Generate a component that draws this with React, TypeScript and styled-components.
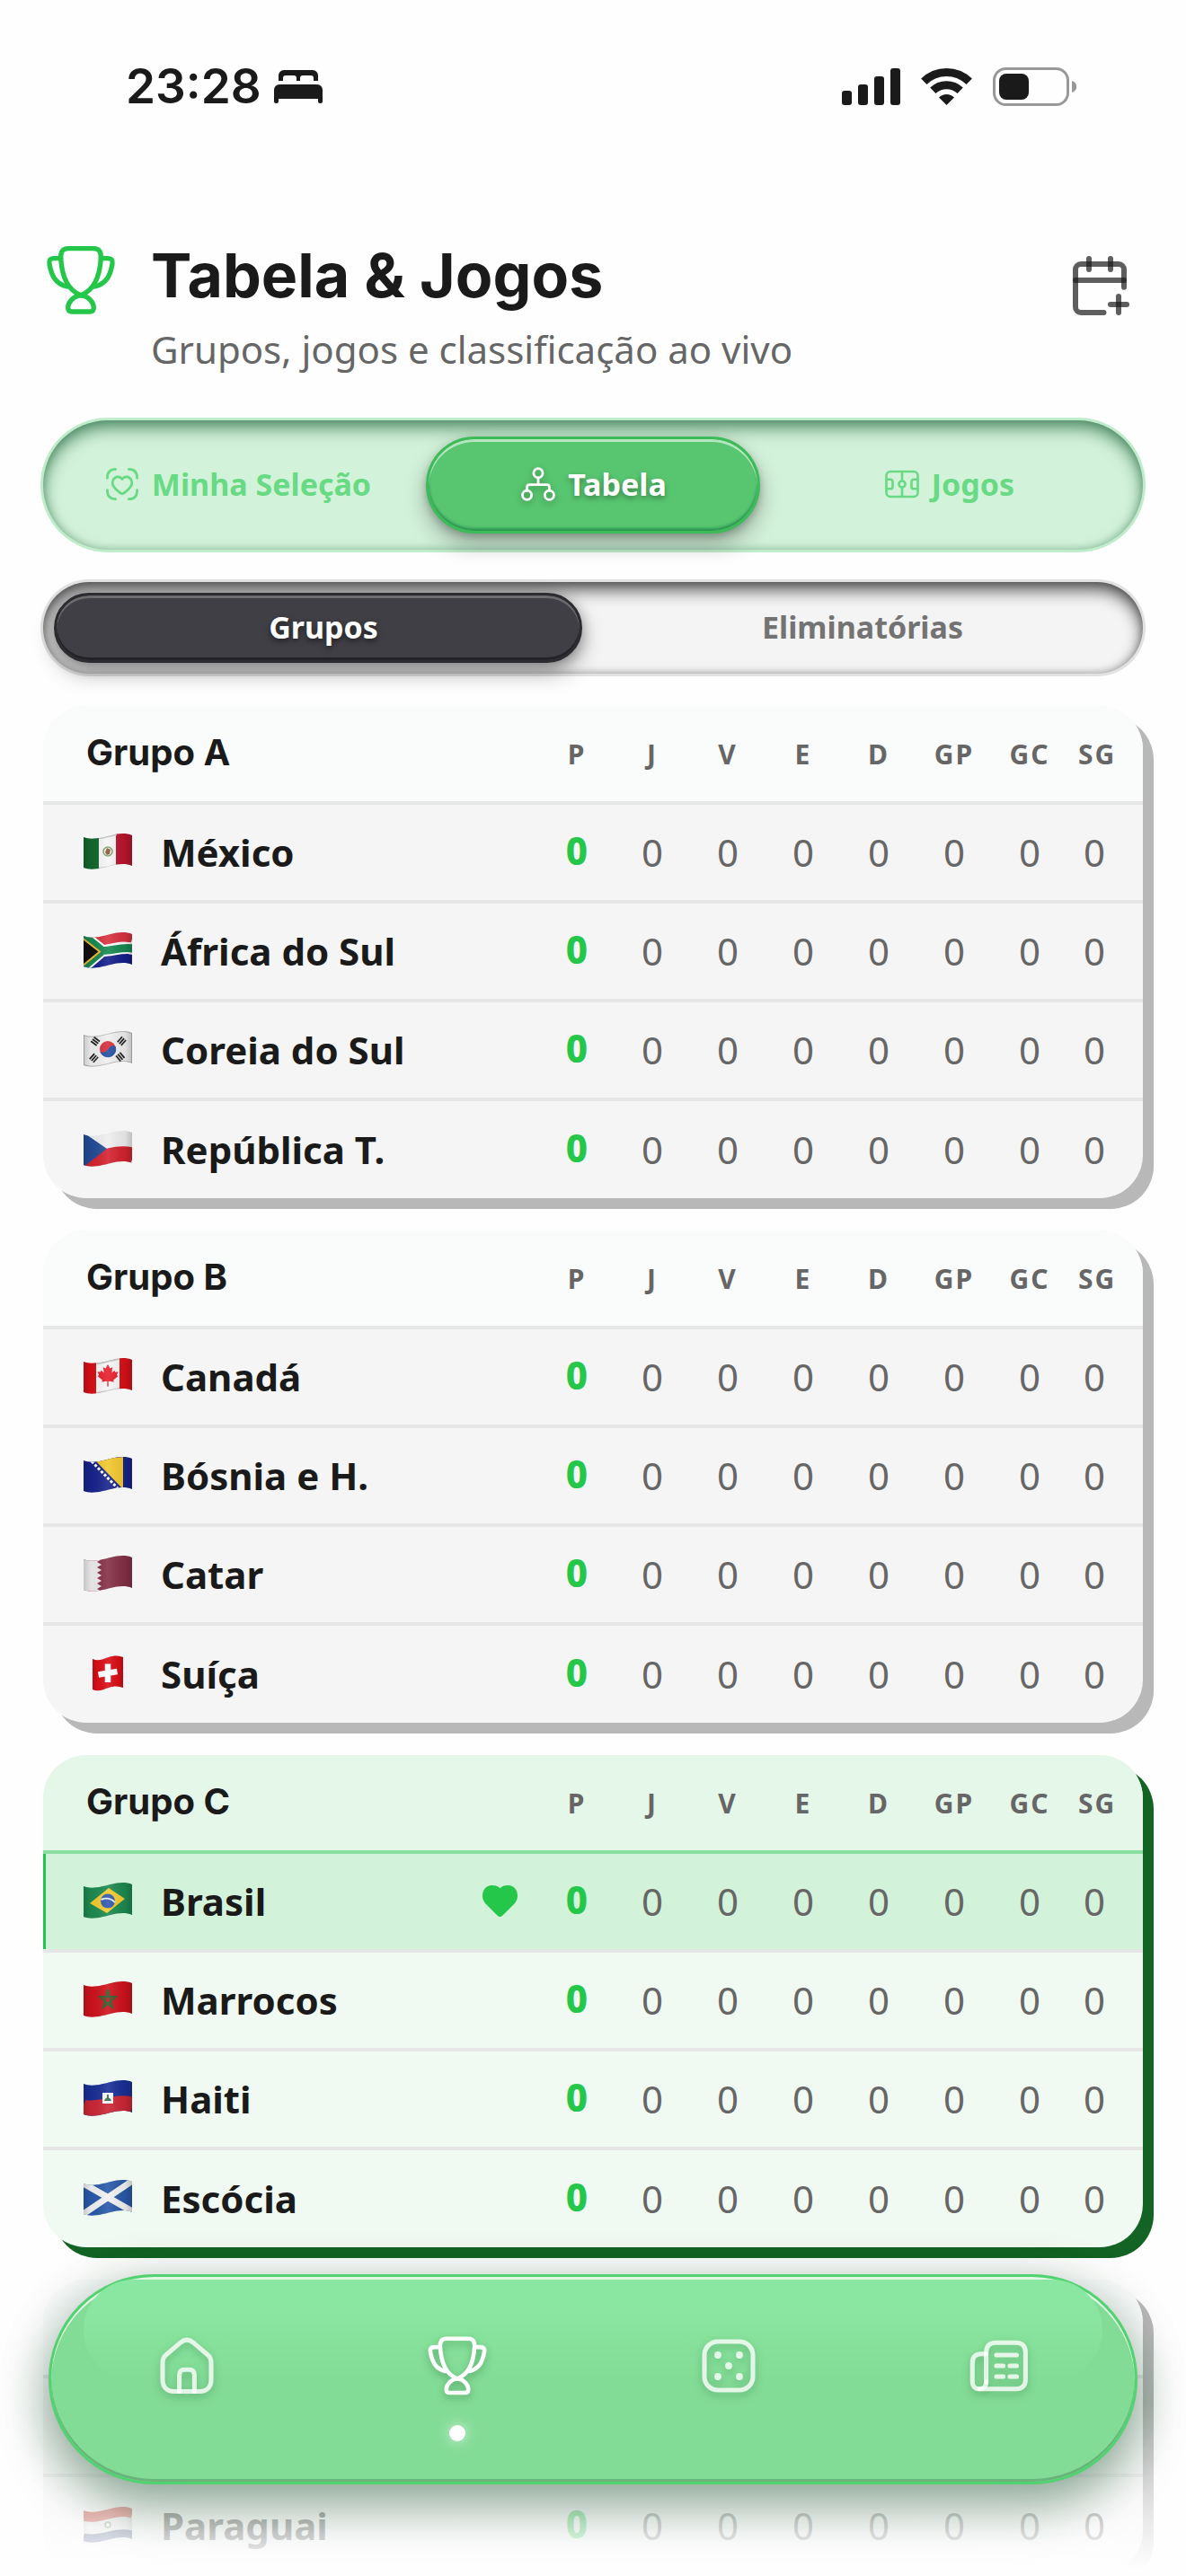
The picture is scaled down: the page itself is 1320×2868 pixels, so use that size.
import React, { useState } from 'react';
import styled, { createGlobalStyle, css } from 'styled-components';

const GlobalStyle = createGlobalStyle`
  * {
    box-sizing: border-box;
  }
  body {
    margin: 0;
    background: #fefefe;
    color: #1a1a1a;
    font-family: 'Noto Sans', sans-serif;
  }
  button {
    font-family: inherit;
    cursor: pointer;
  }
`;

const Screen = styled.div`
  position: relative;
  height: 100vh;
  overflow: hidden;
`;

const StatusBar = styled.div`
  display: flex;
  align-items: center;
  justify-content: space-between;
  height: 192px;
  padding: 0 122px 0 140px;
`;

const StatusGroup = styled.div<{ $gap: number }>`
  display: flex;
  align-items: center;
  gap: ${({ $gap }) => $gap}px;
`;

const Clock = styled.span`
  font-family: Inter, sans-serif;
  font-size: 53px;
  font-weight: 600;
  line-height: 60px;
`;

const Content = styled.main`
  display: flex;
  flex-direction: column;
  gap: 36px;
  padding: 72px 48px 0;
`;

const Header = styled.header`
  display: flex;
  align-items: flex-start;
  gap: 36px;
  padding-bottom: 15px;
`;

const TrophyBox = styled.div`
  display: flex;
  align-items: center;
  justify-content: center;
  width: 84px;
  height: 96px;
  color: #24c74a;
`;

const Titles = styled.div`
  flex: 1;
`;

const Title = styled.h1`
  margin: 0 0 12px;
  font-family: Inter, sans-serif;
  font-size: 68px;
  font-weight: 700;
  line-height: 84px;
`;

const Subtitle = styled.p`
  margin: 0;
  color: #666;
  font-size: 42px;
  line-height: 57px;
`;

const CalendarButton = styled.button`
  margin: 18px 12px 0 0;
  padding: 0;
  border: 0;
  background: none;
  color: rgba(26, 26, 26, 0.7);

  svg {
    display: block;
  }
`;

const Tabs = styled.div`
  display: flex;
  height: 144px;
  padding: 18px;
  border-radius: 72px;
  background: #d3f2da;
  box-shadow: 0 0 0 3px #bfecca, inset 0 9px 18px rgba(23, 95, 52, 0.65), inset 0 0 9px rgba(23, 95, 52, 0.3);
`;

const Tab = styled.button<{ $active: boolean }>`
  display: flex;
  flex: 1;
  align-items: center;
  justify-content: center;
  gap: 12px;
  margin: 0 12px;
  padding: 0 0 2px;
  border: 3px solid transparent;
  border-radius: 54px;
  background: none;
  color: #69da84;
  font-size: 34px;
  font-weight: 700;
  white-space: nowrap;

  ${({ $active }) =>
    $active &&
    css`
      border-color: #3cbc58;
      background: #58c670;
      color: #fff;
      box-shadow: inset 0 3px 0 rgba(255, 255, 255, 0.55), inset 0 -3px 3px rgba(10, 110, 60, 0.55),
        0 12px 24px rgba(0, 0, 0, 0.3), 0 3px 9px rgba(0, 0, 0, 0.2);
      text-shadow: 0 3px 6px rgba(0, 0, 0, 0.35);

      svg {
        filter: drop-shadow(0 3px 4px rgba(0, 0, 0, 0.3));
      }
    `}
`;

const Segmented = styled.div`
  position: relative;
  display: flex;
  height: 102px;
  padding: 12px;
  border-radius: 51px;
  background: #f4f4f4;
  box-shadow: 0 0 0 3px #e2e2e2, inset 0 9px 18px rgba(0, 0, 0, 0.65), inset 0 0 9px rgba(0, 0, 0, 0.25);
`;

const Thumb = styled.span<{ $second: boolean }>`
  position: absolute;
  top: 12px;
  bottom: 12px;
  left: ${({ $second }) => ($second ? '50%' : '12px')};
  width: calc(50% - 24px);
  border: 3px solid #2c2c30;
  border-radius: 39px;
  background: #3f3f45;
  box-shadow: inset 0 3px 0 #6c6c6e, inset 0 -3px 0 #232327, 0 12px 24px rgba(0, 0, 0, 0.3),
    0 3px 15px rgba(0, 0, 0, 0.3);
`;

const Segment = styled.button<{ $active: boolean }>`
  position: relative;
  flex: 1;
  padding: 0 0 2px;
  border: 0;
  background: none;
  color: ${({ $active }) => ($active ? '#fff' : '#737373')};
  font-size: 34px;
  font-weight: 700;
  text-shadow: ${({ $active }) => ($active ? '0 3px 6px rgba(0, 0, 0, 0.5)' : 'none')};
`;

const Card = styled.section<{ $mine?: boolean }>`
  overflow: hidden;
  flex-shrink: 0;
  border-radius: 48px;
  background: ${({ $mine }) => ($mine ? '#f0faf2' : '#f5f5f5')};
  box-shadow: 12px 12px 0 ${({ $mine }) => ($mine ? '#126324' : '#b8b8b8')};
`;

const Table = styled.table`
  width: 100%;
  table-layout: fixed;
  border-collapse: separate;
  border-spacing: 0;
`;

const HeadRow = styled.tr<{ $mine?: boolean }>`
  height: 110px;
  background: ${({ $mine }) => ($mine ? '#e5f7e9' : '#fafbfb')};

  th {
    border-bottom: 4px solid ${({ $mine }) => ($mine ? '#8ade9f' : '#e6e6e6')};
  }
`;

const GroupName = styled.th`
  padding: 0 0 4px 48px;
  font-family: Inter, sans-serif;
  font-size: 40px;
  font-weight: 700;
  text-align: left;
`;

const HeadCell = styled.th`
  width: 84px;
  padding: 0;
  color: #666;
  font-size: 30px;
  font-weight: 700;
  letter-spacing: 2px;

  &:last-child {
    padding-right: 18px;
  }
`;

const TeamRow = styled.tr<{ $mine?: boolean }>`
  height: 110px;
  background: ${({ $mine }) => ($mine ? '#d3f2da' : 'none')};

  td,
  th {
    border-bottom: 4px solid #e6e6e6;
  }
  th {
    box-shadow: ${({ $mine }) => ($mine ? 'inset 3px 0 0 #24c74a' : 'none')};
  }
  &:last-child {
    height: 108px;
  }
  &:last-child td,
  &:last-child th {
    border-bottom: 0;
  }
`;

const TeamCell = styled.th`
  padding: 0 24px 2px 45px;
  font-size: 42px;
  font-weight: 700;
  text-align: left;
`;

const TeamInfo = styled.div`
  display: flex;
  align-items: center;
  gap: 32px;

  svg:last-child {
    margin-left: auto;
  }
`;

const TeamName = styled.span`
  flex: 1;
  line-height: 57px;
`;

const Stat = styled.td`
  padding: 0 0 2px;
  color: #666;
  font-size: 42px;
  line-height: 57px;
  text-align: center;

  &:last-child {
    padding-right: 24px;
  }
`;

const Points = styled(Stat)`
  padding-bottom: 6px;
  color: #24c74a;
  font-weight: 800;
`;

const FlagSvg = styled.svg`
  flex: none;
  clip-path: path('M0 4C9 8 22 4 30 2C38 0 47 -1 54 2V36C47 33 38 34 30 36C22 38 9 42 0 38Z');
`;

const SquareFlagSvg = styled.svg`
  flex: none;
  margin: 0 10px;
  clip-path: path('M0 4C6 7 12 4 18 2C24 0 29 0 34 2V36C29 34 24 34 18 36C12 38 6 41 0 38Z');
`;

const BottomFade = styled.div`
  position: absolute;
  right: 0;
  bottom: 0;
  left: 0;
  height: 192px;
  background: linear-gradient(rgba(254, 254, 254, 0), #fefefe 96%);
`;

const BottomNav = styled.nav`
  position: absolute;
  right: 54px;
  bottom: 102px;
  left: 54px;
  display: flex;
  height: 234px;
  border: 3px solid #52d270;
  border-radius: 117px;
  background: #83dc96;
  box-shadow: inset 0 3px 0 rgba(255, 255, 255, 0.75), inset 0 -3px 0 #68b47b,
    0 24px 54px rgba(20, 80, 40, 0.4), 0 6px 60px rgba(20, 50, 30, 0.16);

  &::before {
    content: '';
    position: absolute;
    top: 3px;
    right: 36px;
    left: 36px;
    height: 112px;
    border-radius: 84px;
    background: linear-gradient(#8ae7a1 20%, rgba(138, 231, 161, 0));
  }
`;

const NavItem = styled.a<{ $active?: boolean }>`
  position: relative;
  display: flex;
  flex: 1;
  flex-direction: column;
  align-items: center;
  gap: 30px;
  padding-top: 63px;
  color: ${({ $active }) => ($active ? '#fff' : 'rgba(255, 255, 255, 0.8)')};

  svg {
    filter: drop-shadow(0 4px 5px rgba(0, 60, 20, 0.3));
  }
`;

const NavDot = styled.span`
  width: 18px;
  height: 18px;
  border-radius: 50%;
  background: #fff;
  box-shadow: 0 0 15px rgba(255, 255, 255, 0.7);
`;

/* ---------- icons ---------- */

const stroke = {
  fill: 'none',
  stroke: 'currentColor',
  strokeLinecap: 'round' as const,
  strokeLinejoin: 'round' as const,
};

const TrophyIcon = ({ size }: { size: number }) => (
  <svg width={size} height={size} viewBox="-12 -12 252 252" {...stroke} strokeWidth="16" aria-hidden>
    <path d="M47 40C46 20 52 8 72 8H156C176 8 182 20 181 40C178 90 162 146 114 164C66 146 50 90 47 40Z" />
    <path d="M47 41H25C11 41 7 47 9 60C16 100 30 126 67 135M181 41H203C217 41 221 47 219 60C212 100 198 126 161 135" />
    <path d="M114 165C88 165 71 191 71 205C71 214 75 219 83 219H145C153 219 157 214 157 205C157 191 140 165 114 165Z" />
  </svg>
);

const CalendarIcon = () => (
  <svg width="72" height="72" viewBox="0 0 24 24" {...stroke} strokeWidth="2" aria-hidden>
    <path d="M8 2v4" />
    <path d="M16 2v4" />
    <path d="M21 12.6V6a2 2 0 0 0-2-2H5a2 2 0 0 0-2 2v14a2 2 0 0 0 2 2h8.5" />
    <path d="M3 10h18" />
    <path d="M16 19h6" />
    <path d="M19 16v6" />
  </svg>
);

const HeartScanIcon = () => (
  <svg width="42" height="42" viewBox="0 0 24 24" {...stroke} strokeWidth="1.6" aria-hidden>
    <path d="M2.5 8.2C2.5 4.5 4.2 2.5 7.8 2.5M16.2 2.5C19.8 2.5 21.5 4.5 21.5 8.2M21.5 15.8C21.5 19.5 19.8 21.5 16.2 21.5M7.8 21.5C4.2 21.5 2.5 19.5 2.5 15.8" />
    <path d="M12 8.8c1.2-1.6 3.2-1.8 4.6-.8 1.9 1.3 2 3.8.8 5.6-1 1.5-2.6 2.9-4.2 4.1-.8.6-1.6.6-2.4 0-1.6-1.2-3.2-2.6-4.2-4.1-1.2-1.8-1.1-4.3.8-5.6 1.4-1 3.4-.8 4.6.8z" />
  </svg>
);

const BracketIcon = () => (
  <svg width="42" height="42" viewBox="0 0 24 24" {...stroke} strokeWidth="1.6" aria-hidden>
    <circle cx="12" cy="5" r="2.9" />
    <circle cx="4.9" cy="19" r="2.9" />
    <circle cx="19.1" cy="19" r="2.9" />
    <path d="M12 8v4.4M4.9 16v-2c0-1 .6-1.6 1.6-1.6h11c1 0 1.6.6 1.6 1.6v2" />
  </svg>
);

const FieldIcon = () => (
  <svg width="42" height="42" viewBox="0 0 24 24" {...stroke} strokeWidth="1.5" aria-hidden>
    <rect x="2" y="4" width="20" height="16" rx="2.6" />
    <path d="M12 4v6M12 14v6" />
    <circle cx="12" cy="12" r="2" />
    <path d="M2 9h2.5c1 0 1.5.5 1.5 1.5v3c0 1-.5 1.5-1.5 1.5H2M22 9h-2.5c-1 0-1.5.5-1.5 1.5v3c0 1 .5 1.5 1.5 1.5H22" />
  </svg>
);

const HomeIcon = () => (
  <svg width="72" height="72" viewBox="0 0 24 24" {...stroke} strokeWidth="1.7" aria-hidden>
    <path d="M3 10.7C3 9.5 3.3 8.9 4.1 8.1L9.7 3.3C11.3 2 12.7 2 14.3 3.3L19.9 8.1C20.7 8.9 21 9.5 21 10.7V17c0 2.9-1.5 4.5-4.3 4.5H7.3C4.5 21.5 3 19.9 3 17Z" />
    <path d="M9.2 21.5V15.6c0-1.5.6-2.2 1.9-2.2h1.8c1.3 0 1.9.7 1.9 2.2v5.9" />
  </svg>
);

const DiceIcon = () => (
  <svg width="72" height="72" viewBox="0 0 24 24" {...stroke} strokeWidth="1.7" aria-hidden>
    <rect x="3" y="3" width="18" height="18" rx="5" />
    {[[8, 8], [16, 8], [12, 12], [8, 16], [16, 16]].map(([x, y]) => (
      <circle key={`${x}-${y}`} cx={x} cy={y} r="1.3" fill="currentColor" stroke="none" />
    ))}
  </svg>
);

const NewsIcon = () => (
  <svg width="72" height="72" viewBox="0 0 24 24" {...stroke} strokeWidth="1.7" aria-hidden>
    <path d="M7.2 18V7c0-2.3 1.2-3.6 3.5-3.6h7.6c2.3 0 3.5 1.3 3.5 3.6v10c0 2.3-1.2 3.6-3.5 3.6H4.7" />
    <path d="M7.2 7.6H5.5C3.2 7.6 2.1 8.7 2.1 11v7c0 1.6 1 2.6 2.5 2.6S7.2 19.6 7.2 18" />
    <path d="M11 8h7.5M11 12h2.5M16 12h2.5M11 16h2.5M16 16h2.5" />
  </svg>
);

const HeartIcon = () => (
  <svg width="39" height="35" viewBox="0 0 39 35" role="img" aria-label="Minha seleção">
    <path
      fill="#24c74a"
      d="M19.5 3.2C22.5.6 25.5 0 28.5 0C35 0 39 5.2 39 11.7C39 15.5 37.5 18.3 35 21L22.5 33.5C20.5 35.500 18.500 35.500 16.500 33.500L4 21C1.500 18.300 0 15.500 0 11.700C0 5.200 4 0 10.500 0C13.500 0 16.500.6 19.500 3.200Z"
    />
  </svg>
);

const BedIcon = () => (
  <svg width="54" height="37" viewBox="0 0 54 37" fill="currentColor" aria-hidden>
    <path d="M5 12V6a6 6 0 0 1 6-6h32a6 6 0 0 1 6 6v6h-5V9a3 3 0 0 0-3-3H32a3 3 0 0 0-3 3v3h-4V9a3 3 0 0 0-3-3h-9a3 3 0 0 0-3 3v3Z" />
    <path d="M0 22a6 6 0 0 1 6-6h42a6 6 0 0 1 6 6v13a2 2 0 0 1-2 2h-1a2 2 0 0 1-2-2v-3H5v3a2 2 0 0 1-2 2H2a2 2 0 0 1-2-2Z" />
  </svg>
);

const SignalIcon = () => (
  <svg width="65" height="42" viewBox="0 0 65 42" fill="currentColor" aria-hidden>
    <rect x="0" y="26" width="11" height="16" rx="3" />
    <rect x="18" y="19" width="11" height="23" rx="3" />
    <rect x="36" y="10" width="11" height="32" rx="3" />
    <rect x="54" y="1" width="11" height="41" rx="3" />
  </svg>
);

const WifiIcon = () => (
  <svg width="57" height="42" viewBox="0 0 57 42" fill="none" stroke="currentColor" strokeWidth="9" aria-hidden>
    <path d="M3.3 15.8A36 36 0 0 1 53.7 15.8" />
    <path d="M13.3 25.8A22 22 0 0 1 43.7 25.8" />
    <path d="M28.5 42L20 33.5A12 12 0 0 1 37 33.5Z" fill="currentColor" stroke="none" />
  </svg>
);

const BatteryIcon = () => (
  <svg width="93" height="43" viewBox="0 0 93 43" aria-hidden>
    <rect x="1.5" y="1.5" width="82" height="40" rx="13" fill="none" stroke="#989898" strokeWidth="3" />
    <rect x="7" y="7" width="33" height="29" rx="8" fill="currentColor" />
    <path d="M88 15c7 2 7 11 0 13Z" fill="#989898" />
  </svg>
);

/* ---------- flags ---------- */

// a horizontal band that follows the wave of the cloth
const Band = ({ y, h, color }: { y: number; h: number; color: string }) => (
  <path
    d={`M-1 ${y + 4}C9 ${y + 8} 22 ${y + 4} 30 ${y + 2}S47 ${y - 1} 55 ${y + 2}`}
    fill="none"
    stroke={color}
    strokeWidth={h}
  />
);

const flags: Record<string, React.ReactNode> = {
  mx: (
    <>
      <rect width="18" height="40" fill="#11672c" />
      <rect x="17" width="20" height="40" fill="#f6f6f6" />
      <rect x="36" width="18" height="40" fill="#b9152c" />
      <path d="M17 5C22 5 28 3 37 1M17 39C24 38 30 37 37 35" stroke="#c4c4c4" strokeWidth="2" fill="none" />
      <circle cx="27" cy="20" r="5" fill="none" stroke="#7f9a6b" strokeWidth="1.5" />
      <path d="M24 21l2-5 4 2-1 5-3 1z" fill="#8a5a35" />
    </>
  ),
  za: (
    <>
      <rect width="54" height="40" fill="#f6f6f6" />
      <Band y={3} h={15} color="#d8323f" />
      <Band y={31} h={15} color="#15208a" />
      <path d="M-2 2L21 20.5L-2 40M20 20.5C30 21 42 16 55 18" fill="none" stroke="#fff" strokeWidth="13" />
      <path d="M-2 2L21 20.5L-2 40M20 20.5C30 21 42 16 55 18" fill="none" stroke="#178a52" strokeWidth="9" />
      <path d="M-2 6L18 21.5L-2 38Z" fill="#111" stroke="#f2b92e" strokeWidth="2" />
    </>
  ),
  kr: (
    <>
      <rect width="54" height="40" fill="#f0f0f0" />
      <path d="M0 4C9 8 22 4 30 2C38 0 47 -1 54 2V36C47 33 38 34 30 36C22 38 9 42 0 38Z" fill="none" stroke="#bdbdbd" strokeWidth="2" />
      <circle cx="27" cy="20" r="9" fill="#d6303c" />
      <path d="M18 22A9 9 0 0 0 36 18C34 15 30 16 27.5 20S20 25 18 22Z" fill="#2350a4" />
      <g fill="none" stroke="#222" strokeWidth="8" strokeDasharray="1.8 1">
        <path d="M10 13l7-3" transform="rotate(-30 13 12)" />
        <path d="M38 7l6 4M10 30l6 4" transform="rotate(8 27 20)" />
        <path d="M38 31l6-5" />
      </g>
    </>
  ),
  cz: (
    <>
      <rect width="54" height="40" fill="#efefef" />
      <Band y={27} h={20} color="#d4232f" />
      <path d="M0 2L26 20L0 40Z" fill="#234c96" />
    </>
  ),
  ca: (
    <>
      <rect width="54" height="40" fill="#f6f6f6" />
      <path d="M14 6C22 6 30 2 40 1M14 39C22 38 30 36 40 34" stroke="#c4c4c4" strokeWidth="2" fill="none" />
      <rect width="14" height="40" fill="#d80f17" />
      <rect x="40" width="14" height="40" fill="#d80f17" />
      <path
        d="M27 7l2.5 4.5 2.7-1.2-.8 6.2 3-2.8.8 2 3.3-.4-1.5 3.7 1.5 1-5.2 4.5.4 2-6-.8v6h-1.4v-6l-6 .9.5-2-5.3-4.6 1.6-1-1.5-3.7 3.3.3.8-2 3 2.8-.9-6.2 2.7 1.2z"
        fill="#e8202c"
      />
    </>
  ),
  ba: (
    <>
      <rect width="54" height="40" fill="#18248c" />
      <path d="M12 3L44 36V0Z" fill="#f2c82d" />
      <path d="M9 5L38 35" stroke="#fff" strokeWidth="3" strokeDasharray="3 2" />
    </>
  ),
  qa: (
    <>
      <rect width="54" height="40" fill="#853046" />
      <path d="M0 0H15l5 4-5 3 5 3-5 3 5 3-5 3 5 3-5 3 5 3-5 3 5 3-5 3 5 3H0Z" fill="#ececec" />
    </>
  ),
  br: (
    <>
      <rect width="54" height="40" fill="#1d8a50" />
      <path d="M7 23L28 6L46 18L26 34Z" fill="#f2cb2f" />
      <circle cx="27" cy="20.5" r="8" fill="#3159ae" />
      <path d="M19.5 19C25 16.5 31 18 35 22" fill="none" stroke="#e8eef5" strokeWidth="2" />
    </>
  ),
  ma: (
    <>
      <rect width="54" height="40" fill="#cf121c" />
      <path d="M27 9L32 29L18 17H36L22 29Z" fill="none" stroke="#28602c" strokeWidth="2" />
    </>
  ),
  ht: (
    <>
      <rect width="54" height="40" fill="#1a2f97" />
      <Band y={26} h={18} color="#cc2635" />
      <rect x="21" y="14" width="12" height="12" fill="#f4f4f4" />
      <path d="M23 23c2-5 6-5 8 0zM26 16h2v4h-2z" fill="#3a6b4d" />
    </>
  ),
  sc: (
    <>
      <rect width="54" height="40" fill="#2959aa" />
      <path d="M-2 3L56 36M-2 39L56 0" stroke="#f2f2f2" strokeWidth="7" />
    </>
  ),
  us: (
    <>
      <rect width="54" height="40" fill="#f2f2f2" />
      {[1, 7, 13, 19, 25, 31].map(y => (
        <Band key={y} y={y} h={3} color="#c8202f" />
      ))}
      <rect width="24" height="22" fill="#27408b" />
    </>
  ),
  py: (
    <>
      <rect width="54" height="40" fill="#f2f2f2" />
      <Band y={4} h={14} color="#d0281c" />
      <Band y={31} h={12} color="#26366f" />
      <circle cx="27" cy="20" r="3" fill="none" stroke="#5c8a5c" strokeWidth="1.5" />
    </>
  ),
};

const Flag = ({ code }: { code: string }) => {
  if (code === 'ch') {
    return (
      <SquareFlagSvg width="34" height="40" viewBox="0 0 34 40" aria-hidden>
        <rect width="34" height="40" fill="#dc0f18" />
        <path d="M17 9.5V30M6.5 21.5L27.5 18" stroke="#fff" strokeWidth="6.5" />
        <rect width="34" height="40" fill="url(#flag-shade)" />
      </SquareFlagSvg>
    );
  }
  return (
    <FlagSvg width="54" height="40" viewBox="0 0 54 40" aria-hidden>
      {flags[code]}
      <rect width="54" height="40" fill="url(#flag-shade)" />
    </FlagSvg>
  );
};

const HiddenDefs = styled.svg`
  position: absolute;
`;

const FlagDefs = () => (
  <HiddenDefs width="0" height="0" aria-hidden>
    <linearGradient id="flag-shade">
      <stop offset="0" stopColor="#000" stopOpacity=".16" />
      <stop offset=".15" stopColor="#000" stopOpacity=".04" />
      <stop offset=".5" stopColor="#fff" stopOpacity=".1" />
      <stop offset=".85" stopColor="#000" stopOpacity=".06" />
      <stop offset="1" stopColor="#000" stopOpacity=".2" />
    </linearGradient>
  </HiddenDefs>
);

/* ---------- data ---------- */

const columns = ['P', 'J', 'V', 'E', 'D', 'GP', 'GC', 'SG'];

interface Team {
  flag: string;
  name: string;
  favorite?: boolean;
}

const groups: { name: string; teams: Team[] }[] = [
  {
    name: 'Grupo A',
    teams: [
      { flag: 'mx', name: 'México' },
      { flag: 'za', name: 'África do Sul' },
      { flag: 'kr', name: 'Coreia do Sul' },
      { flag: 'cz', name: 'República T.' },
    ],
  },
  {
    name: 'Grupo B',
    teams: [
      { flag: 'ca', name: 'Canadá' },
      { flag: 'ba', name: 'Bósnia e H.' },
      { flag: 'qa', name: 'Catar' },
      { flag: 'ch', name: 'Suíça' },
    ],
  },
  {
    name: 'Grupo C',
    teams: [
      { flag: 'br', name: 'Brasil', favorite: true },
      { flag: 'ma', name: 'Marrocos' },
      { flag: 'ht', name: 'Haiti' },
      { flag: 'sc', name: 'Escócia' },
    ],
  },
  {
    name: 'Grupo D',
    teams: [
      { flag: 'us', name: 'EUA' },
      { flag: 'py', name: 'Paraguai' },
    ],
  },
];

const tabs = [
  { label: 'Minha Seleção', icon: <HeartScanIcon /> },
  { label: 'Tabela', icon: <BracketIcon /> },
  { label: 'Jogos', icon: <FieldIcon /> },
];

const GroupTable = ({ name, teams }: { name: string; teams: Team[] }) => {
  const mine = teams.some(team => team.favorite);

  return (
    <Card $mine={mine}>
      <Table>
        <thead>
          <HeadRow $mine={mine}>
            <GroupName scope="col">{name}</GroupName>
            {columns.map(column => (
              <HeadCell key={column} scope="col">
                {column}
              </HeadCell>
            ))}
          </HeadRow>
        </thead>
        <tbody>
          {teams.map(team => (
            <TeamRow key={team.name} $mine={team.favorite}>
              <TeamCell scope="row">
                <TeamInfo>
                  <Flag code={team.flag} />
                  <TeamName>{team.name}</TeamName>
                  {team.favorite && <HeartIcon />}
                </TeamInfo>
              </TeamCell>
              <Points>0</Points>
              {columns.slice(1).map(column => (
                <Stat key={column}>0</Stat>
              ))}
            </TeamRow>
          ))}
        </tbody>
      </Table>
    </Card>
  );
};

const App = () => {
  const [tab, setTab] = useState('Tabela');
  const [phase, setPhase] = useState('Grupos');

  return (
    <Screen>
      <GlobalStyle />
      <FlagDefs />
      <StatusBar>
        <StatusGroup $gap={14}>
          <Clock>23:28</Clock>
          <BedIcon />
        </StatusGroup>
        <StatusGroup $gap={23}>
          <SignalIcon />
          <WifiIcon />
          <BatteryIcon />
        </StatusGroup>
      </StatusBar>

      <Content>
        <Header>
          <TrophyBox>
            <TrophyIcon size={84} />
          </TrophyBox>
          <Titles>
            <Title>Tabela &amp; Jogos</Title>
            <Subtitle>Grupos, jogos e classificação ao vivo</Subtitle>
          </Titles>
          <CalendarButton aria-label="Adicionar ao calendário">
            <CalendarIcon />
          </CalendarButton>
        </Header>

        <Tabs>
          {tabs.map(({ label, icon }) => (
            <Tab key={label} $active={tab === label} onClick={() => setTab(label)}>
              {icon}
              {label}
            </Tab>
          ))}
        </Tabs>

        <Segmented>
          <Thumb $second={phase !== 'Grupos'} />
          {['Grupos', 'Eliminatórias'].map(label => (
            <Segment key={label} $active={phase === label} onClick={() => setPhase(label)}>
              {label}
            </Segment>
          ))}
        </Segmented>

        {groups.map(group => (
          <GroupTable key={group.name} {...group} />
        ))}
      </Content>

      <BottomFade />
      <BottomNav>
        <NavItem href="#inicio" aria-label="Início">
          <HomeIcon />
        </NavItem>
        <NavItem href="#tabela" aria-label="Tabela" $active>
          <TrophyIcon size={72} />
          <NavDot />
        </NavItem>
        <NavItem href="#palpites" aria-label="Palpites">
          <DiceIcon />
        </NavItem>
        <NavItem href="#noticias" aria-label="Notícias">
          <NewsIcon />
        </NavItem>
      </BottomNav>
    </Screen>
  );
};

export default App;
